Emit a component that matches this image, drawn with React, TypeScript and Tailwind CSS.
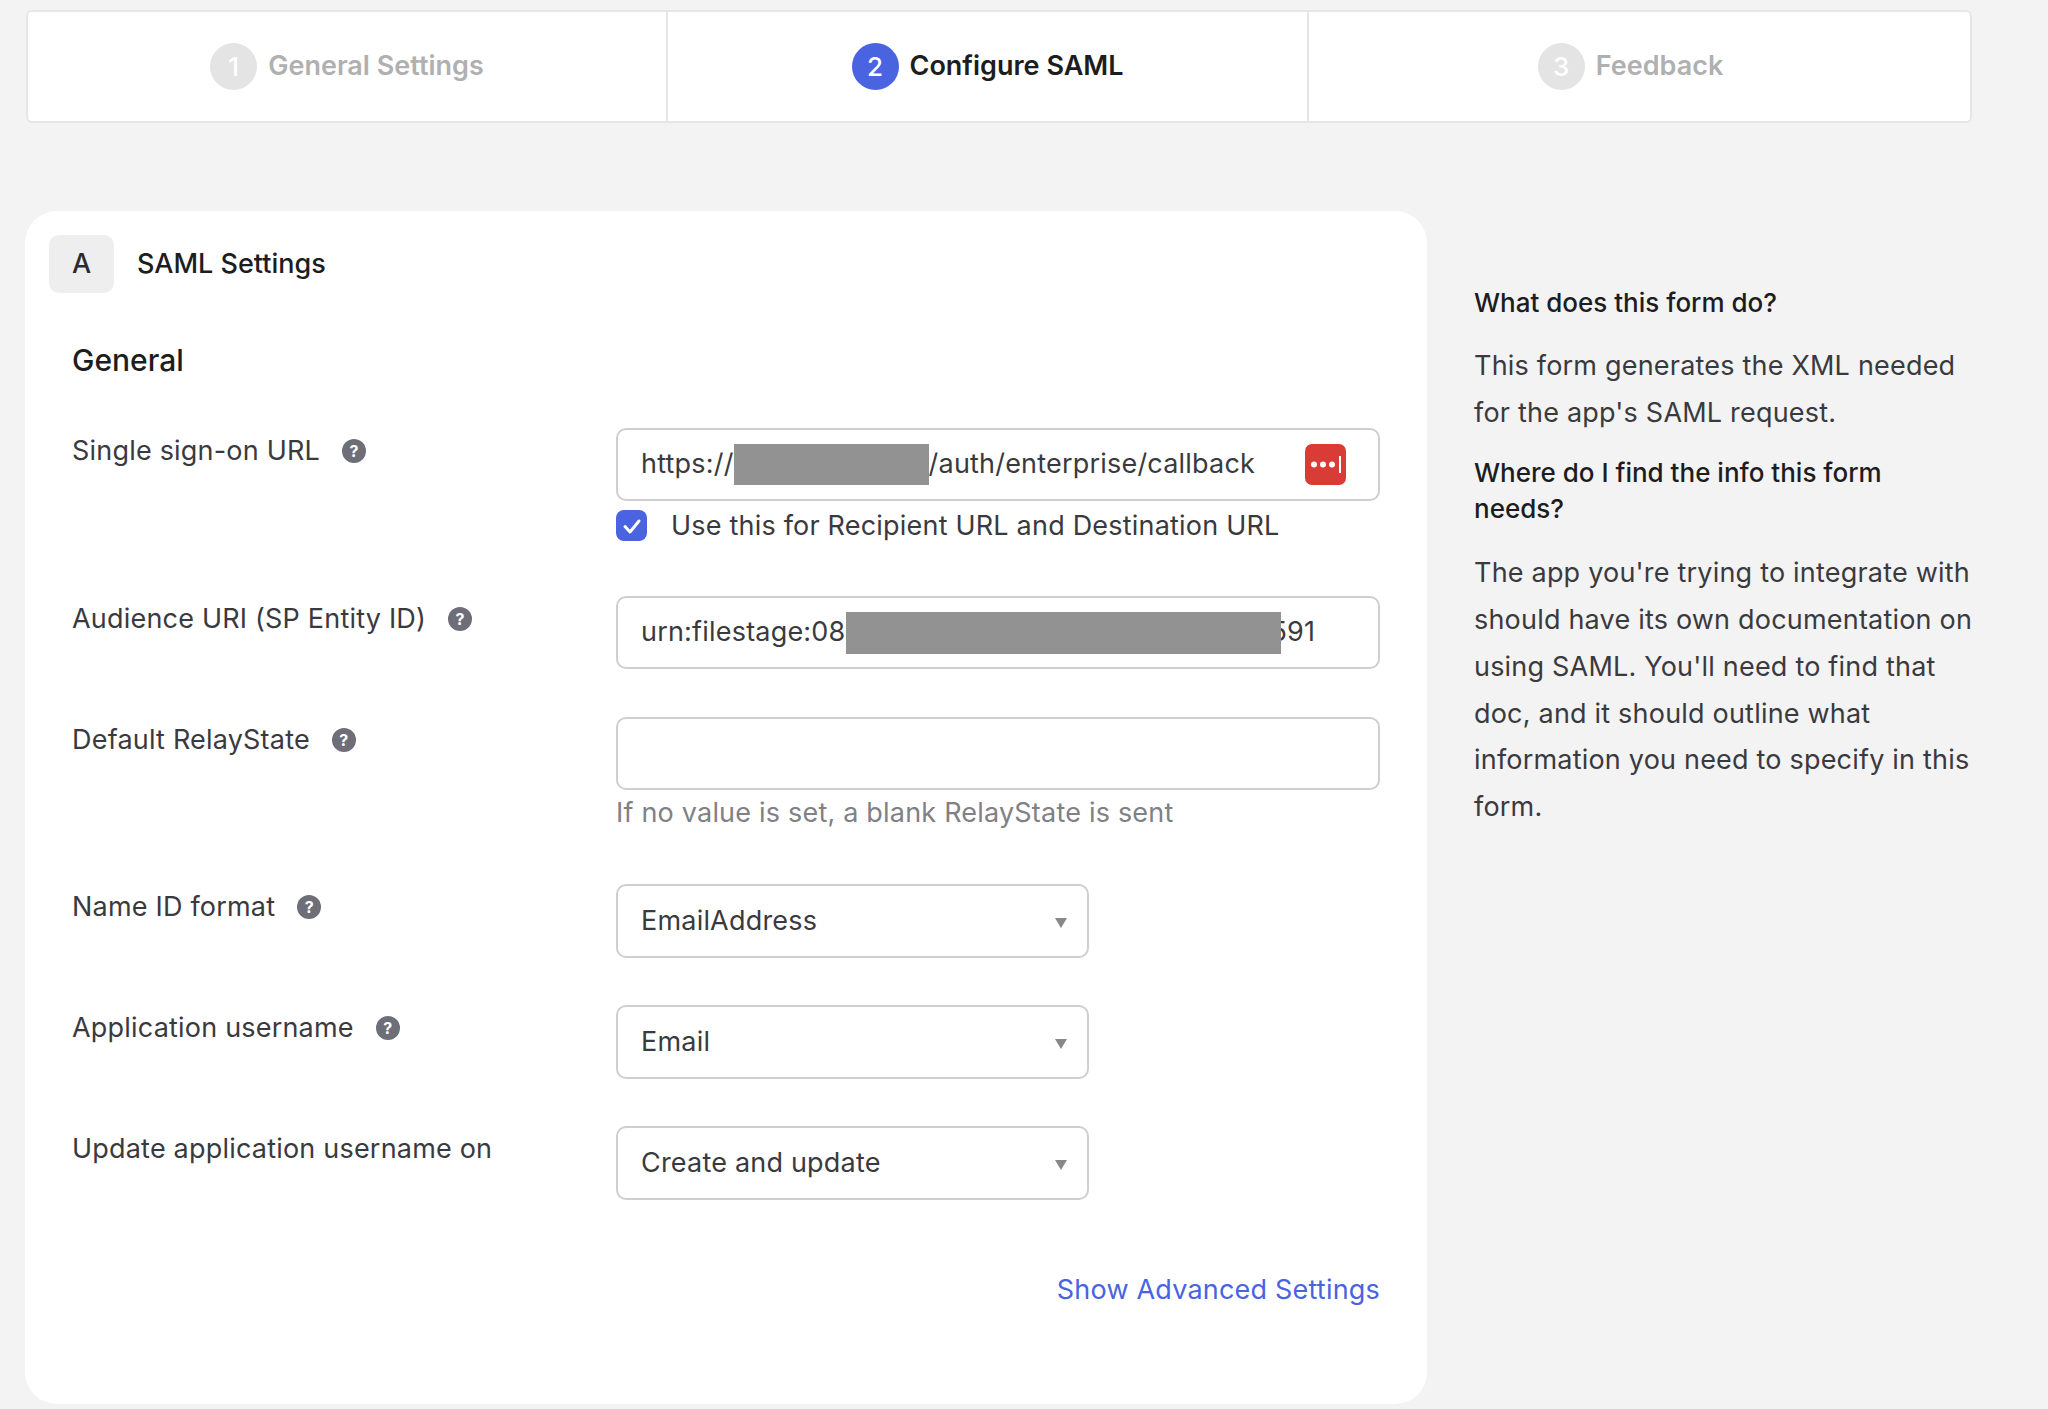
import React from "react";

const font = { fontFamily: '"Inter", "Liberation Sans", sans-serif' };

function Step({ n, label, active, className }: { n: number; label: string; active?: boolean; className: string }) {
  return (
    <div className={`flex items-center justify-center gap-[11px] ${className}`}>
      <div
        className={`flex h-[47px] w-[47px] items-center justify-center rounded-full text-[26px] font-medium ${
          active ? "bg-[#4a63e0] text-white" : "bg-[#e4e4e4] text-white"
        }`}
      >
        {n}
      </div>
      <span className={`text-[27px] font-semibold ${active ? "text-[#1d1d21]" : "text-[#b0b0b0]"}`}>{label}</span>
    </div>
  );
}

function Help() {
  return (
    <span className="flex h-[24px] w-[24px] shrink-0 items-center justify-center rounded-full bg-[#6e6e78] text-[16px] font-bold leading-none text-white">
      ?
    </span>
  );
}

function Label({ text, help = true }: { text: string; help?: boolean }) {
  return (
    <div className="flex h-[46px] w-[544px] shrink-0 items-center gap-[22px] text-[27px] tracking-[0.2px] text-[#3a3a3e]">
      <span>{text}</span>
      {help && <Help />}
    </div>
  );
}

function Select({ value }: { value: string }) {
  return (
    <div className="flex h-[74px] w-[473px] items-center justify-between rounded-[10px] border-2 border-[#cfcfcf] bg-white pl-[23px] pr-[20px] text-[27px] tracking-[0.2px] text-[#3a3a3e]">
      <span>{value}</span>
      <svg width="12" height="10" viewBox="0 0 12 10" className="mt-[4px]">
        <path d="M0 0h12L6 10z" fill="#888888" />
      </svg>
    </div>
  );
}

const inputCls =
  "flex h-[73px] w-[764px] items-center rounded-[10px] border-2 border-[#cfcfcf] bg-white pl-[23px] text-[27px] tracking-[0.2px] text-[#3a3a3e] whitespace-nowrap";

export default function App() {
  return (
    <div className="h-[1409px] w-[2048px] overflow-hidden bg-[#f3f3f3] pt-[10px]" style={font}>
      <div className="ml-[26px] flex h-[113px] w-[1946px] rounded-[6px] border-2 border-[#e6e6e6] bg-white">
        <Step n={1} label="General Settings" className="w-[640px] border-r-2 border-[#e6e6e6]" />
        <Step n={2} label="Configure SAML" active className="w-[641px] border-r-2 border-[#e6e6e6]" />
        <Step n={3} label="Feedback" className="flex-1 pr-[18px]" />
      </div>

      <div className="mt-[88px] flex">
        <div className="ml-[25px] h-[1193px] w-[1402px] rounded-[32px] bg-white pt-[24px]">
          <div className="ml-[24px] flex items-center gap-[23px]">
            <div className="flex h-[58px] w-[65px] items-center justify-center rounded-[10px] bg-[#eeeeee] text-[27px] font-medium text-[#2b2b2f]">
              A
            </div>
            <span className="text-[27px] font-medium text-[#1d1d21]">SAML Settings</span>
          </div>

          <div className="ml-[47px] mt-[44px] text-[30px] font-medium leading-[46px] text-[#1d1d21]">General</div>

          <div className="ml-[47px] mt-[45px]">
            <div className="flex">
              <Label text="Single sign-on URL" />
              <div>
                <div className={`${inputCls} justify-between pr-[32px]`}>
                  <span className="flex items-center">
                    https://
                    <span className="inline-block h-[41px] w-[195px] bg-[#929292]" />
                    /auth/enterprise/callback
                  </span>
                  <svg width="41" height="41" viewBox="0 0 41 41">
                    <rect width="41" height="41" rx="7" fill="#d93b36" />
                    <circle cx="9" cy="20.5" r="3" fill="#fff" />
                    <circle cx="18" cy="20.5" r="3" fill="#fff" />
                    <circle cx="27" cy="20.5" r="3" fill="#fff" />
                    <rect x="34" y="12" width="2" height="17" fill="#fff" />
                  </svg>
                </div>
                <div className="mt-[9px] flex items-center gap-[24px]">
                  <span className="flex h-[31px] w-[31px] items-center justify-center rounded-[8px] bg-[#4a63e0]">
                    <svg width="20" height="20" viewBox="0 0 20 20" fill="none">
                      <path d="M3 10.5l5 5.5 9-11" stroke="#fff" strokeWidth="3" strokeLinecap="round" strokeLinejoin="round" />
                    </svg>
                  </span>
                  <span className="text-[27px] leading-[31px] tracking-[0.2px] text-[#3a3a3e]">
                    Use this for Recipient URL and Destination URL
                  </span>
                </div>
              </div>
            </div>

            <div className="mt-[55px] flex">
              <Label text="Audience URI (SP Entity ID)" />
              <div className={inputCls}>
                urn:filestage:08
                <span className="relative z-10 -mr-[10px] inline-block h-[42px] w-[435px] bg-[#929292]" />
                591
              </div>
            </div>

            <div className="mt-[48px] flex">
              <Label text="Default RelayState" />
              <div>
                <div className={inputCls} />
                <div className="text-[27px] leading-[46px] tracking-[0.2px] text-[#808085]">
                  If no value is set, a blank RelayState is sent
                </div>
              </div>
            </div>

            <div className="mt-[48px] flex">
              <Label text="Name ID format" />
              <Select value="EmailAddress" />
            </div>

            <div className="mt-[47px] flex">
              <Label text="Application username" />
              <Select value="Email" />
            </div>

            <div className="mt-[47px] flex">
              <Label text="Update application username on" help={false} />
              <Select value="Create and update" />
            </div>

            <div className="mt-[67px] w-[1308px] text-right text-[27px] leading-[46px] tracking-[0.2px] text-[#4a63e0]">
              Show Advanced Settings
            </div>
          </div>
        </div>

        <div className="ml-[47px] w-[500px] pt-[69px] text-[27px] leading-[46.7px] text-[#3a3a3e]">
          <div className="text-[26px] font-medium leading-[46px] text-[#1d1d21]">What does this form do?</div>
          <p className="mt-[17px] tracking-[0.2px]">
            This form generates the XML needed
            <br />
            for the app's SAML request.
          </p>
          <div className="mt-[19px] text-[26px] font-medium leading-[36px] text-[#1d1d21]">
            Where do I find the info this form
            <br />
            needs?
          </div>
          <p className="mt-[23px] tracking-[0.2px]">
            The app you're trying to integrate with
            <br />
            should have its own documentation on
            <br />
            using SAML. You'll need to find that
            <br />
            doc, and it should outline what
            <br />
            information you need to specify in this
            <br />
            form.
          </p>
        </div>
      </div>
    </div>
  );
}
